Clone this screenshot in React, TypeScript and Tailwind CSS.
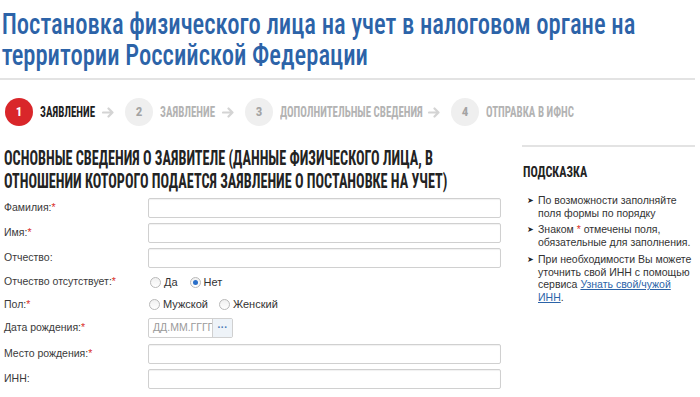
const COND = { fontFamily: "Roboto, sans-serif", fontStretch: "condensed" } as const;

const STEPS = [
  { n: "1", label: "ЗАЯВЛЕНИЕ", w: "w-[55px]", active: true },
  { n: "2", label: "ЗАЯВЛЕНИЕ", w: "w-[55px]" },
  { n: "3", label: "ДОПОЛНИТЕЛЬНЫЕ СВЕДЕНИЯ", w: "w-[141px]" },
  { n: "4", label: "ОТПРАВКА В ИФНС", w: "w-[88px]" },
];

function Arrow() {
  return (
    <svg width="13" height="11" viewBox="0 0 13 11" className="ml-[7px] mr-[10px]">
      <path d="M1 5.5h9.5M6.5 1.5l4 4-4 4" stroke="#d4d4d4" strokeWidth="2.2" fill="none" strokeLinecap="round" strokeLinejoin="round" />
    </svg>
  );
}

function Label({ text, req }: { text: string; req?: boolean }) {
  return (
    <div className="w-[144px] shrink-0 text-[10.5px] text-[#3a3a3a]">
      {text}:{req && <span className="text-[#d9302b]">*</span>}
    </div>
  );
}

function Field({ text, req }: { text: string; req?: boolean }) {
  return (
    <div className="flex h-[25px] items-center">
      <Label text={text} req={req} />
      <div className="h-[20px] w-[353px] rounded-[2px] border border-[#d0d0d0] bg-white shadow-[inset_0_1px_1px_rgba(0,0,0,0.06)]" />
    </div>
  );
}

function Radio({ label, checked, className }: { label: string; checked?: boolean; className?: string }) {
  return (
    <span className={`flex items-center ${className ?? ""}`}>
      <span className="mr-[3px] flex h-[11px] w-[11px] items-center justify-center rounded-full border border-[#b9b9b9] bg-gradient-to-b from-[#f0f0f0] to-white">
        {checked && <span className="h-[5px] w-[5px] rounded-full bg-[#2a6fc9]" />}
      </span>
      <span className="text-[11px] text-[#333]">{label}</span>
    </span>
  );
}

function Bullet() {
  return <span className="w-[11px] shrink-0 pt-[1px] text-[8px] text-[#222]">➤</span>;
}

export default function App() {
  return (
    <div className="h-[397px] w-[700px] overflow-hidden bg-white" style={{ fontFamily: '"Liberation Sans", Arial, sans-serif' }}>
      <h1
        className="w-[849px] origin-left scale-x-[0.82] px-[2px] pt-[8px] text-[30px] font-medium leading-[31px] text-[#2c63a8]"
        style={COND}
      >
        Постановка физического лица на учет в налоговом органе на территории Российской Федерации
      </h1>
      <div className="mt-[8px] mr-[5px] h-[2px] bg-[#e3e3e3]" />

      <div className="flex items-center pl-[5px] pt-[18px]">
        {STEPS.map((s, i) => (
          <div key={s.n} className="flex items-center">
            <span
              className={`flex h-[28px] w-[28px] items-center justify-center rounded-full text-[13px] font-bold ${
                s.active ? "bg-[#d9262a] text-white" : "bg-[#efefef] text-[#a3a3a3]"
              }`}
              style={COND}
            >
              {s.n}
            </span>
            <span className={`ml-[7px] shrink-0 ${s.w}`}>
              <span
                className={`inline-block origin-left scale-x-[0.78] whitespace-nowrap text-[14px] font-bold ${
                  s.active ? "text-[#1e1e1e]" : "text-[#b3b3b3]"
                }`}
                style={COND}
              >
                {s.label}
              </span>
            </span>
            {i < STEPS.length - 1 && <Arrow />}
          </div>
        ))}
      </div>

      <div className="flex pt-[19px]">
        <div className="w-[522px] shrink-0 pl-[4px]">
          <h2
            className="mt-[2px] w-[680px] origin-left scale-x-[0.71] text-[20px] font-bold leading-[23px] text-[#232323]"
            style={COND}
          >
            ОСНОВНЫЕ СВЕДЕНИЯ О ЗАЯВИТЕЛЕ (ДАННЫЕ ФИЗИЧЕСКОГО ЛИЦА, В ОТНОШЕНИИ КОТОРОГО ПОДАЕТСЯ ЗАЯВЛЕНИЕ О ПОСТАНОВКЕ НА УЧЕТ)
          </h2>
          <div className="mt-[2px]">
            <Field text="Фамилия" req />
            <Field text="Имя" req />
            <Field text="Отчество" />
            <div className="flex h-[24px] items-center">
              <Label text="Отчество отсутствует" req />
              <Radio label="Да" className="ml-[2px] mr-[12px]" />
              <Radio label="Нет" checked />
            </div>
            <div className="flex h-[21px] items-center">
              <Label text="Пол" req />
              <Radio label="Мужской" className="ml-[1px] mr-[11px]" />
              <Radio label="Женский" />
            </div>
            <div className="flex h-[26px] items-center">
              <Label text="Дата рождения" req />
              <div className="flex h-[20px] w-[85px] items-stretch overflow-hidden rounded-[2px] border border-[#d0d0d0]">
                <span className="flex w-[63px] shrink-0 items-center overflow-hidden whitespace-nowrap pl-[4px] text-[10.5px] text-[#9a9a9a]">
                  ДД.ММ.ГГГГ
                </span>
                <span className="flex flex-1 items-center justify-center border-l border-[#d0d0d0] bg-[#eef3f8] text-[10px] font-bold leading-none text-[#4a78b5]">
                  ···
                </span>
              </div>
            </div>
            <Field text="Место рождения" req />
            <Field text="ИНН" />
          </div>
        </div>

        <div className="w-[173px] shrink-0">
          <div className="h-[2px] bg-[#e3e3e3]" />
          <div className="pt-[16px] pl-[1px] leading-[18px]">
            <span className="inline-block origin-left scale-x-[0.81] whitespace-nowrap text-[15px] font-bold text-[#232323]" style={COND}>
              ПОДСКАЗКА
            </span>
          </div>
          <ul className="mt-[13px] pl-[5px] text-[10.5px] leading-[12.7px] text-[#333]">
            <li className="mb-[4px] flex">
              <Bullet />
              <span>По возможности заполняйте поля формы по порядку</span>
            </li>
            <li className="mb-[4px] flex">
              <Bullet />
              <span>
                Знаком <span className="text-[#d9302b]">*</span> отмечены поля, обязательные для заполнения.
              </span>
            </li>
            <li className="flex">
              <Bullet />
              <span>
                При необходимости Вы можете уточнить свой ИНН с помощью сервиса{" "}
                <a className="text-[#2c63a8] underline">Узнать свой/чужой ИНН</a>.
              </span>
            </li>
          </ul>
        </div>
      </div>
    </div>
  );
}
